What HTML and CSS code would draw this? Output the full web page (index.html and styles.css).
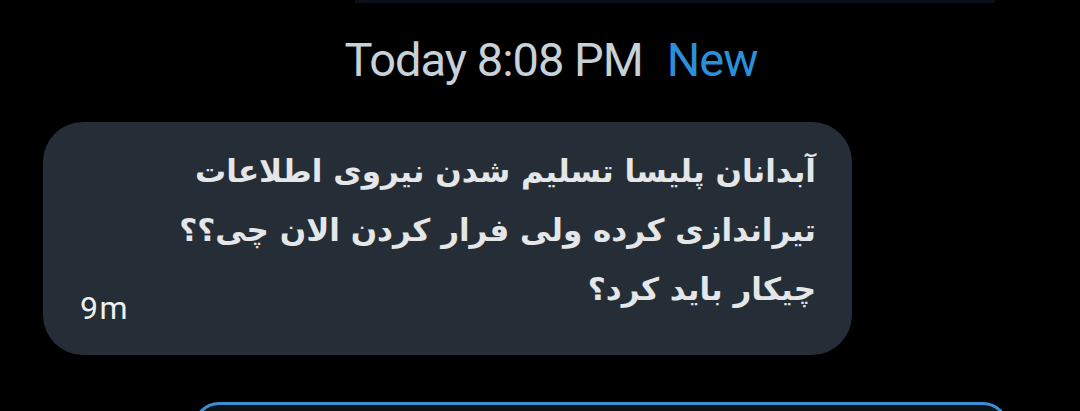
FILE: index.html
```html
<!DOCTYPE html>
<html>
<head>
<meta charset="utf-8">
<link rel="stylesheet" href="styles.css">
</head>
<body>
<div class="page">
  <div class="topbar"></div>
  <div class="stamp"><span class="time">Today 8:08 PM</span><span class="new">New</span></div>
  <div class="row">
    <div class="bubble">
      <div class="ago">9m</div>
      <div class="msg" dir="rtl">آبدانان پلیسا تسلیم شدن نیروی اطلاعات<br>تیراندازی کرده ولی فرار کردن الان چی؟؟<br>چیکار باید کرد؟</div>
    </div>
  </div>
  <div class="composer"></div>
</div>
</body>
</html>
```
FILE: styles.css
```css
html, body { margin: 0; padding: 0; background: #000; }
.page { width: 1080px; height: 411px; overflow: hidden; position: relative; font-family: Roboto, "Liberation Sans", sans-serif; }
.topbar { margin-left: 355px; width: 640px; height: 3px; background: #0b0f1a; }
.stamp { display: flex; justify-content: center; align-items: baseline; padding-left: 22px; margin-top: 29px; height: 57px; font-size: 47px; letter-spacing: -1px; }
.time { color: #c6d1d8; }
.new { color: #2b8fdc; margin-left: 24px; }
.row { margin-top: 33px; padding-left: 43px; }
.bubble { width: 809px; height: 233px; box-sizing: border-box; background: #252e36; border-radius: 40px; display: flex; justify-content: space-between; align-items: flex-end; padding: 20px 36px 27px 37px; }
.ago { color: #eef0f2; font-size: 32px; letter-spacing: 1.5px; margin-bottom: 1px; }
.msg { align-self: flex-start; color: #e4e6e8; font-family: "DejaVu Sans", sans-serif; font-weight: bold; font-size: 31px; line-height: 59px; text-align: right; }
.composer { position: absolute; left: 193px; top: 402px; width: 816px; height: 60px; box-sizing: border-box; border: 3px solid #3a8fd4; border-radius: 26px; background: #0b1218; }
```
